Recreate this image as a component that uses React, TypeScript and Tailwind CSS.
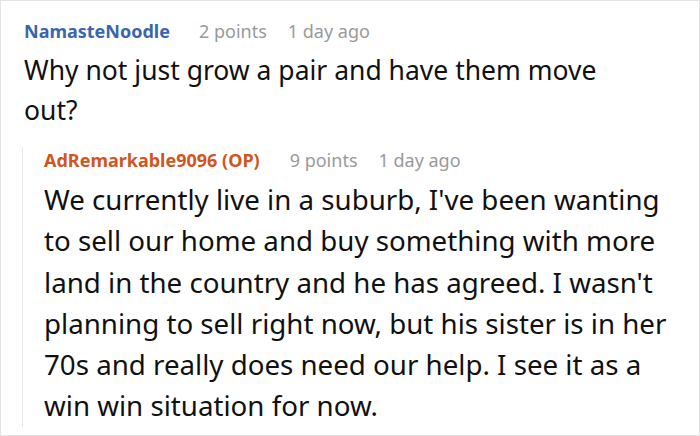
const font = { fontFamily: '"Noto Sans", "Open Sans", sans-serif' }

export default function App() {
  return (
    <div className="w-[700px] h-[436px] bg-white border border-[#e3e3e3] overflow-hidden" style={font}>
      <div className="pl-[21px] pr-4 pt-[17px]">
        <div className="pl-[2px]">
          <div className="flex items-baseline text-[18px] leading-[26px]">
            <span className="font-bold text-[#3866b0]">NamasteNoodle</span>
            <span className="ml-[29px] text-[#9a9a9a]">2 points</span>
            <span className="ml-[21px] text-[#9a9a9a]">1 day ago</span>
          </div>
          <p className="text-[26.5px] leading-[40px] text-[#111] mt-[6px] pr-[40px]">
            Why not just grow a pair and have them move out?
          </p>
        </div>
        <div className="mt-[17px] border-l border-[#e6e6e6] pl-[21px]">
          <div className="flex items-baseline text-[18px] leading-[26px]">
            <span className="font-bold text-[#d0561f]">AdRemarkable9096 (OP)</span>
            <span className="ml-[30px] text-[#9a9a9a]">9 points</span>
            <span className="ml-[21px] text-[#9a9a9a]">1 day ago</span>
          </div>
          <p className="text-[27.7px] leading-[41.3px] text-[#111] mt-[6px] pr-[10px]">
            We currently live in a suburb, I've been wanting to sell our home and buy something with more land in the
            country and he has agreed. I wasn't planning to sell right now, but his sister is in her 70s and really
            does need our help. I see it as a win win situation for now.
          </p>
        </div>
      </div>
    </div>
  )
}
